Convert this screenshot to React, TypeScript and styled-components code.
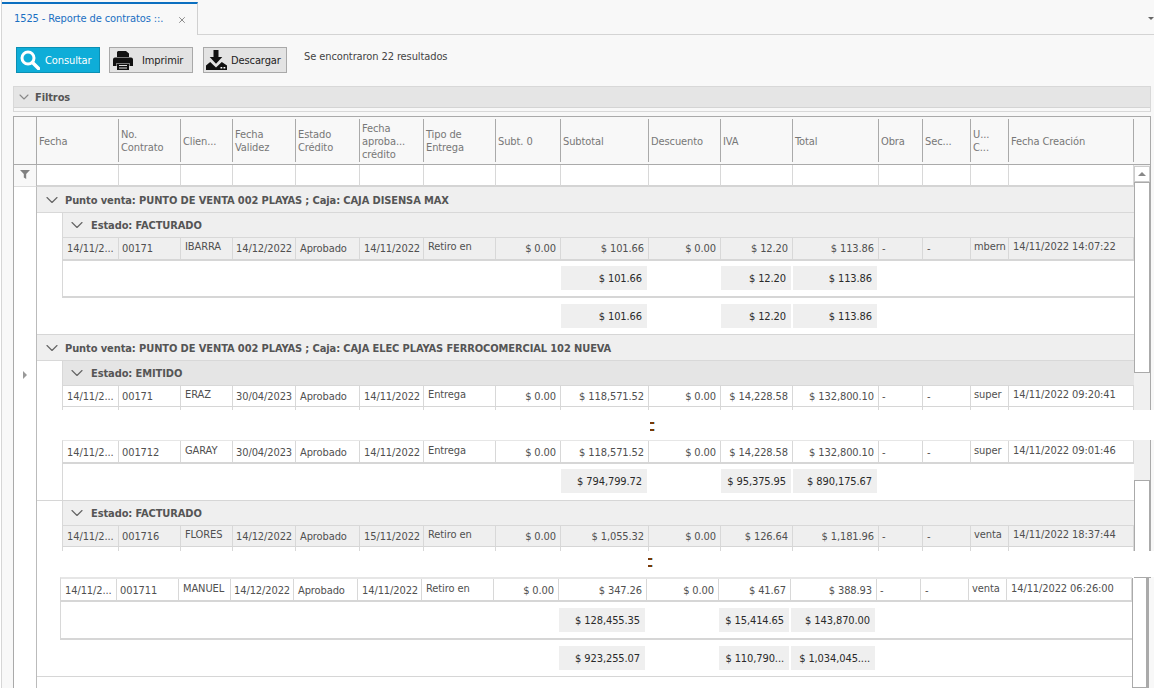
import React from "react";
import styled, { createGlobalStyle } from "styled-components";
import { ChevronDown, X } from "lucide-react";

const REST = "62px 52px 63px 64px 64px 72px 65px 88px 72px 72px 86px 44px 48px 38px 125px";
const COUNT = 16;

const Global = createGlobalStyle`
  html, body { margin: 0; padding: 0; background: #fff; }
  * { box-sizing: border-box; }
  body { font-family: "DejaVu Sans Condensed", "DejaVu Sans", "Noto Sans", sans-serif; font-stretch: condensed; font-size: 11px; letter-spacing: -0.1px; }
`;

const Win = styled.div`
  position: relative; width: 1153px; height: 688px; overflow: hidden;
  background: #f8f8f8; border-left: 1px solid #d6d6d6; margin-left: 1px;
`;
const TabStrip = styled.div`
  display: flex; height: 35px; padding-top: 2px; border-bottom: 1px solid #d4d4d4; position: relative; justify-content: space-between;
`;
const Tab = styled.div`
  width: 196px; height: 33px; background: #f8f8f8; border-top: 2px solid #0b6fc0; border-right: 1px solid #d0d0d0;
  display: flex; align-items: center; padding-left: 12px; color: #1a6fc2; position: relative; z-index: 1;
`;
const TabTitle = styled.span` flex: 1; padding-bottom: 2px; `;
const TabClose = styled.span` display: flex; color: #777; margin-right: 10px; `;
const TabMenu = styled.span`
  width: 0; height: 0; margin: 15px 0 0 0; border-left: 3px solid transparent; border-right: 3px solid transparent; border-top: 3px solid #666;
`;
const Toolbar = styled.div` display: flex; gap: 9px; padding: 12px 0 13px 14px; `;
const ToolButton = styled.div<{ $primary?: boolean }>`
  width: 84px; height: 26px; display: flex; align-items: center;
  background: ${p => (p.$primary ? "#0eadd8" : "#e3e3e3")};
  border: 1px solid ${p => (p.$primary ? "#0b8fb3" : "#a9a9a9")};
  color: ${p => (p.$primary ? "#fff" : "#222")};
`;
const DownloadButton = styled(ToolButton)` margin-left: 1px; `;
const IconSlot = styled.span<{ $w: number; $pad: number }>`
  display: flex; align-items: center; width: ${p => p.$w}px; padding-left: ${p => p.$pad}px; flex: none;
`;
const ResultText = styled.span` margin: 3px 0 0 8px; color: #444; `;
const FilterPanel = styled.div`
  margin-left: 11px; width: 1138px; height: 26px; border: 1px solid #d8d8d8;
`;
const FilterHead = styled.div`
  height: 21px; background: #e5e5e5; border-bottom: 1px solid #d4d4d4; display: flex; align-items: center;
  padding-left: 2px; gap: 3px; font-weight: 700; color: #555;
`;
const Grid = styled.div`
  margin: 4px 0 0 11px; width: 1138px; border-top: 1px solid #aaa; border-left: 1px solid #aaa; height: 600px;
`;
const Header = styled.div`
  display: grid; grid-template-columns: 23px 82px ${REST} 17px; height: 48px; border-bottom: 1px solid #aaa; border-right: 1px solid #aaa; background: #f8f8f8;
`;
const HeadCorner = styled.div` border-right: 1px solid #aaa; `;
const HeadCell = styled.div`
  margin: 2px 0; border-right: 1px solid #aaa; padding: 1px 2px 0; display: flex; align-items: center; color: #777; line-height: 13px; overflow: hidden;
`;
const HeadEnd = styled.div``;
const Area = styled.div` display: flex; `;
const Main = styled.div` width: 1120px; `;
const FilterRow = styled.div`
  display: grid; grid-template-columns: 23px 82px ${REST}; height: 22px; background: #fff;
`;
const FilterCorner = styled.div`
  background: #f8f8f8; border-right: 1px solid #bbb; border-bottom: 1px solid #ddd; display: flex; align-items: center; justify-content: center; padding-bottom: 3px;
`;
const FilterCell = styled.div` border-right: 1px solid #d8d8d8; border-bottom: 2px solid #d4d4d4; `;
const BodyRow = styled.div` display: flex; `;
const Indicator = styled.div`
  width: 23px; flex: none; background: #fff; border-right: 1px solid #bbb; padding: 182px 0 0 9px; height: 520px;
`;
const Content = styled.div` width: 1097px; overflow: hidden; background: #fff; height: 501px; `;
const GroupRow = styled.div`
  height: 26px; background: #efefef; border-bottom: 1px solid #d8d8d8; display: flex; align-items: center;
  padding: 1px 0 0 5px; gap: 3px; font-weight: 700; color: #555;
`;
const Indent = styled.div` padding-left: 25px; `;
const SubRow = styled.div<{ $dark?: boolean }>`
  height: 25px; background: ${p => (p.$dark ? "#e5e5e5" : "#efefef")}; border-left: 1px solid #d8d8d8; border-bottom: 1px solid #d8d8d8; display: flex; align-items: center;
  padding-left: 4px; gap: 4px; font-weight: 700; color: #555;
`;
const DataGrid = styled.div<{ $h: number; $shaded?: boolean; $line: number; $top?: number }>`
  display: grid; grid-template-columns: 56px ${REST}; height: ${p => p.$h}px;
  background: ${p => (p.$shaded ? "#efefef" : "#fff")}; border-left: 1px solid #d8d8d8;
  border-bottom: ${p => p.$line}px solid #d6d6d6; border-top: ${p => p.$top ?? 0}px solid #e6e6e6;
`;
const DataCell = styled.div<{ $right?: boolean; $raised?: boolean; $pad: number; $low?: boolean }>`
  display: flex; align-items: center; justify-content: ${p => (p.$right ? "flex-end" : "flex-start")};
  padding: ${p => (p.$low ? 2 : 0)}px ${p => (p.$right ? p.$pad : 0)}px ${p => (p.$raised ? 4 : 0)}px ${p => (p.$right ? 0 : p.$pad)}px;
  border-right: 1px solid #d8d8d8; color: #505050; white-space: nowrap; overflow: hidden;
`;
const StubCell = styled.div` border-right: 1px solid #d8d8d8; `;
const SumGrid = styled.div<{ $first: number; $h: number; $line: number; $edge?: boolean; $pad: number }>`
  display: grid; grid-template-columns: ${p => p.$first}px ${REST}; height: ${p => p.$h}px; background: #fff;
  padding-top: ${p => p.$pad}px; border-bottom: ${p => p.$line}px solid #d6d6d6;
  ${p => (p.$edge ? "border-left: 1px solid #d8d8d8;" : "")}
`;
const SumCell = styled.div<{ $col: number }>`
  grid-column: ${p => p.$col}; grid-row: 1; height: 24px; margin-right: 2px; background: #efefef; color: #2a2a2a;
  display: flex; align-items: center; justify-content: flex-end; padding-right: 5px; white-space: nowrap; overflow: hidden;
`;
const SumLine = styled.div` border-bottom: 1px solid #d6d6d6; `;
const Shifted = styled.div` margin: 0 2px 0 -2px; `;
const Scrollbar = styled.div` width: 17px; flex: none; `;
const ScrollUpper = styled.div`
  height: 413px; background: #f0f0f0; border-right: 1px solid #aaa; display: flex; flex-direction: column;
`;
const ScrollButton = styled.div`
  height: 16px; margin-top: 1px; background: #fff; border: 1px solid #ccc; display: flex; align-items: center; justify-content: center;
`;
const ScrollArrow = styled.span`
  width: 0; height: 0; border-left: 4px solid transparent; border-right: 4px solid transparent; border-bottom: 4px solid #888;
`;
const Thumb = styled.div<{ $h: number }>`
  height: ${p => p.$h}px; background: #fff; border: 1px solid #aaa; flex: none;
`;
const ScrollTrack = styled.div` flex: 1; `;
const ScrollLower = styled.div` margin-left: -2px; width: 17px; height: 110px; border-right: 2px solid #aaa; `;
const LowerThumb = styled.div` width: 15px; height: 110px; background: #fff; border: 1px solid #aaa; border-top: 0; `;
const Tear = styled.div<{ $top: number; $h: number; $right: number; $pad: number; $offset: number }>`
  position: absolute; left: 60px; right: ${p => p.$right}px; top: ${p => p.$top}px; height: ${p => p.$h}px; background: #fff;
  display: flex; flex-direction: column; gap: 5px; padding: ${p => p.$offset}px 0 0 ${p => p.$pad}px;
`;
const TearDash = styled.span`
  width: 5px; height: 2px; background: linear-gradient(90deg, #7a3a08 0 4px, #8fd0f5 4px);
`;

const SearchIcon = () => (
  <svg width="20" height="20" viewBox="0 0 20 20" fill="none" stroke="#fff">
    <circle cx="8" cy="8" r="6" strokeWidth="3" />
    <path d="M12.500 12.500L18.500 18.500" strokeWidth="3.500" strokeLinecap="round" />
  </svg>
);
const PrinterIcon = () => (
  <svg width="20" height="19" viewBox="0 0 20 19" fill="#111">
    <path d="M5 0h8l3 2.500V6H4V1z" />
    <path d="M2 6.500h16a2 2 0 0 1 2 2V15h-3.500v-3h-13v3H0V8.500a2 2 0 0 1 2-2z" />
    <path d="M4 12.500h12V19H4zM6 14v1h8v-1zm0 2.500v1h8v-1z" fillRule="evenodd" />
  </svg>
);
const DownloadIcon = () => (
  <svg width="21" height="20" viewBox="0 0 21 20" fill="#111">
    <path d="M7.500 0h5v7h3.800l-6.300 6.800L3.700 7h3.800z" />
    <path d="M0 20v-4.500L4.200 12l5.800 5.600L15.800 12l5.200 3.500V20z" />
    <path d="M14.500 17h1.800v1.500h-1.800zM17.500 17h1.800v1.500h-1.800z" fill="#fff" />
  </svg>
);
const FunnelIcon = () => (
  <svg width="10" height="9" viewBox="0 0 10 9" fill="#808080"><path d="M0 0h10L6.200 4v5L3.800 7.500V4z" /></svg>
);
const RowArrow = () => (
  <svg width="4" height="8" viewBox="0 0 4 8" fill="#999"><path d="M0 0l4 4-4 4z" /></svg>
);

const heads = ["Fecha", "No. Contrato", "Clien...", "Fecha Validez", "Estado Crédito", "Fecha aproba... crédito", "Tipo de Entrega", "Subt. 0", "Subtotal", "Descuento", "IVA", "Total", "Obra", "Sec...", "U... C...", "Fecha Creación"];

const layout = [
  { pad: 4 }, { pad: 3 }, { pad: 4, raised: true }, { pad: 3 }, { pad: 4 }, { pad: 4 }, { pad: 4, raised: true },
  { pad: 4, right: true }, { pad: 4, right: true }, { pad: 4, right: true }, { pad: 4, right: true }, { pad: 4, right: true },
  { pad: 3 }, { pad: 4 }, { pad: 3, raised: true }, { pad: 4, raised: true },
];

const money = (s: string) => "$ " + s;
const row = (no: string, client: string, valid: string, approved: string, kind: string, subtotal: string, iva: string, total: string, user: string, created: string) => [
  "14/11/2...", no, client, valid, "Aprobado", approved, kind, money("0.00"), money(subtotal), money("0.00"), money(iva), money(total), "-", "-", user, created,
];

type RowProps = { cells: string[]; shaded?: boolean; h: number; line: number; top?: number };
const Row = ({ cells, shaded, h, line, top }: RowProps) => (
  <DataGrid $h={h} $line={line} $shaded={shaded} $top={top}>
    {cells.map((c, i) => (
      <DataCell key={i} $pad={layout[i].pad} $right={layout[i].right} $raised={layout[i].raised} $low={!!top}>{c}</DataCell>
    ))}
  </DataGrid>
);
const Stub = ({ h }: { h: number }) => (
  <DataGrid $h={h} $line={0}>
    {Array.from({ length: COUNT }, (_, i) => <StubCell key={i} />)}
  </DataGrid>
);
type SumProps = { values: [string, string, string]; first: number; h: number; line: number; edge?: boolean; pad: number };
const Sum = ({ values, first, h, line, edge, pad }: SumProps) => (
  <SumGrid $first={first} $h={h} $line={line} $edge={edge} $pad={pad}>
    <SumCell $col={9}>{money(values[0])}</SumCell>
    <SumCell $col={11}>{money(values[1])}</SumCell>
    <SumCell $col={12}>{money(values[2])}</SumCell>
  </SumGrid>
);
const Group = ({ children }: { children: React.ReactNode }) => (
  <GroupRow><ChevronDown size={20} color="#666" strokeWidth={1.4} />{children}</GroupRow>
);
const Sub = ({ children, dark }: { children: React.ReactNode; dark?: boolean }) => (
  <Indent>
    <SubRow $dark={dark}><ChevronDown size={20} color="#666" strokeWidth={1.4} />{children}</SubRow>
  </Indent>
);

export default function App() {
  return (
    <>
      <Global />
      <Win>
        <TabStrip>
          <Tab>
            <TabTitle>1525 - Reporte de contratos ::.</TabTitle>
            <TabClose><X size={10} strokeWidth={2} /></TabClose>
          </Tab>
          <TabMenu />
        </TabStrip>
        <Toolbar>
          <ToolButton $primary>
            <IconSlot $w={28} $pad={3}><SearchIcon /></IconSlot>
            Consultar
          </ToolButton>
          <ToolButton>
            <IconSlot $w={32} $pad={3}><PrinterIcon /></IconSlot>
            Imprimir
          </ToolButton>
          <DownloadButton>
            <IconSlot $w={27} $pad={2}><DownloadIcon /></IconSlot>
            Descargar
          </DownloadButton>
          <ResultText>Se encontraron 22 resultados</ResultText>
        </Toolbar>
        <FilterPanel>
          <FilterHead><ChevronDown size={16} color="#888" strokeWidth={1.6} />Filtros</FilterHead>
        </FilterPanel>
        <Grid>
          <Header>
            <HeadCorner />
            {heads.map(h => <HeadCell key={h}>{h}</HeadCell>)}
            <HeadEnd />
          </Header>
          <Area>
            <Main>
              <FilterRow>
                <FilterCorner><FunnelIcon /></FilterCorner>
                {heads.map(h => <FilterCell key={h} />)}
              </FilterRow>
              <BodyRow>
                <Indicator><RowArrow /></Indicator>
                <Content>
                  <Group>Punto venta: PUNTO DE VENTA 002 PLAYAS ; Caja: CAJA DISENSA MAX</Group>
                  <Sub>Estado: FACTURADO</Sub>
                  <Indent>
                    <Row shaded h={23} line={2} cells={row("00171", "IBARRA", "14/12/2022", "14/11/2022", "Retiro en", "101.66", "12.20", "113.86", "mbern", "14/11/2022 14:07:22")} />
                    <Sum first={56} edge h={37} line={2} pad={5} values={["101.66", "12.20", "113.86"]} />
                  </Indent>
                  <Sum first={82} h={37} line={1} pad={6} values={["101.66", "12.20", "113.86"]} />
                  <Group>Punto venta: PUNTO DE VENTA 002 PLAYAS ; Caja: CAJA ELEC PLAYAS FERROCOMERCIAL 102 NUEVA</Group>
                  <Sub dark>Estado: EMITIDO</Sub>
                  <Indent>
                    <Row h={21} line={1} cells={row("00171", "ERAZ", "30/04/2023", "14/11/2022", "Entrega", "118,571.52", "14,228.58", "132,800.10", "super", "14/11/2022 09:20:41")} />
                    <Stub h={33} />
                    <Row h={24} line={2} top={1} cells={row("001712", "GARAY", "30/04/2023", "14/11/2022", "Entrega", "118,571.52", "14,228.58", "132,800.10", "super", "14/11/2022 09:01:46")} />
                    <Sum first={56} edge h={36} line={0} pad={5} values={["794,799.72", "95,375.95", "890,175.67"]} />
                  </Indent>
                  <SumLine />
                  <Sub>Estado: FACTURADO</Sub>
                  <Indent>
                    <Row shaded h={21} line={1} cells={row("001716", "FLORES", "14/12/2022", "15/11/2022", "Retiro en", "1,055.32", "126.64", "1,181.96", "venta", "14/11/2022 18:37:44")} />
                    <Stub h={30} />
                  </Indent>
                  <Shifted>
                    <Indent>
                      <Row h={25} line={2} top={2} cells={row("001711", "MANUEL", "14/12/2022", "14/11/2022", "Retiro en", "347.26", "41.67", "388.93", "venta", "14/11/2022 06:26:00")} />
                      <Sum first={56} edge h={38} line={2} pad={6} values={["128,455.35", "15,414.65", "143,870.00"]} />
                    </Indent>
                    <Sum first={82} h={37} line={1} pad={6} values={["923,255.07", "110,790...", "1,034,045...."]} />
                  </Shifted>
                </Content>
              </BodyRow>
            </Main>
            <Scrollbar>
              <ScrollUpper>
                <ScrollButton><ScrollArrow /></ScrollButton>
                <Thumb $h={191} />
                <ScrollTrack />
                <Thumb $h={98} />
              </ScrollUpper>
              <ScrollLower><LowerThumb /></ScrollLower>
            </Scrollbar>
          </Area>
        </Grid>
        <Tear $top={410} $h={30} $right={0} $pad={588} $offset={12}><TearDash /><TearDash /></Tear>
        <Tear $top={551} $h={26} $right={0} $pad={586} $offset={7}><TearDash /><TearDash /></Tear>
      </Win>
    </>
  );
}
